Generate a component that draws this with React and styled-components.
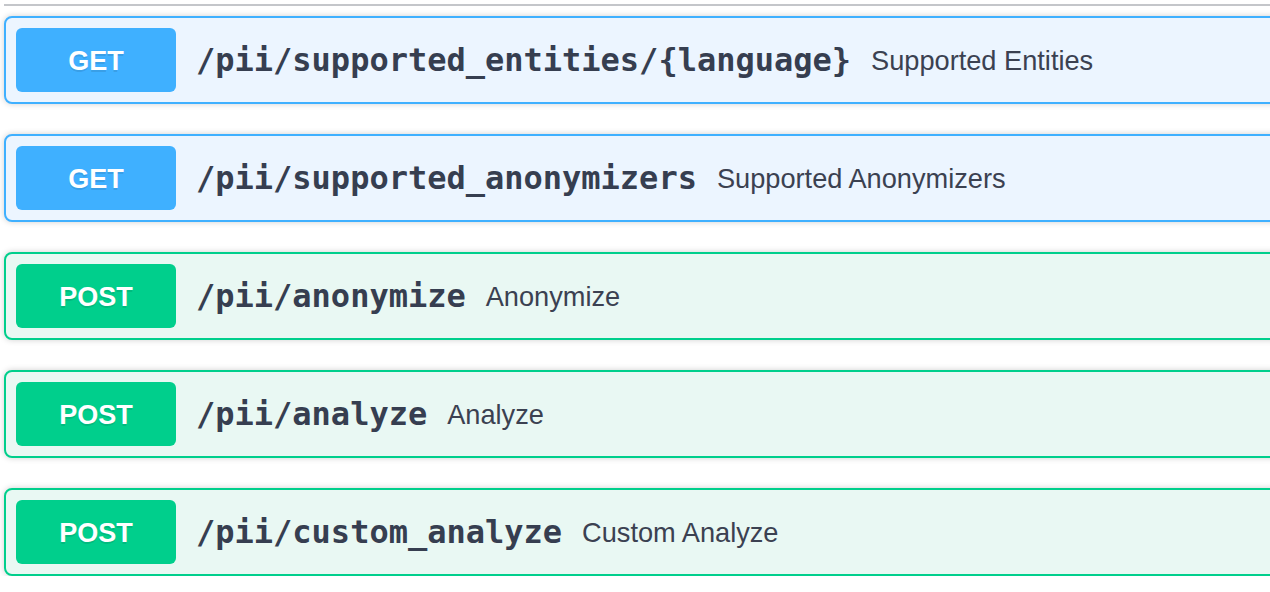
import React from 'react'
import styled, { createGlobalStyle } from 'styled-components'

const GlobalStyle = createGlobalStyle`
  html, body {
    margin: 0;
    padding: 0;
    background: #ffffff;
    overflow: hidden;
  }
`

const methodColors = {
  get: { main: '#3fb0ff', light: '#ecf5ff' },
  post: { main: '#00cf8c', light: '#e9f8f3' },
}

const endpoints = [
  { method: 'get', path: '/pii/supported_entities/{language}', summary: 'Supported Entities' },
  { method: 'get', path: '/pii/supported_anonymizers', summary: 'Supported Anonymizers' },
  { method: 'post', path: '/pii/anonymize', summary: 'Anonymize' },
  { method: 'post', path: '/pii/analyze', summary: 'Analyze' },
  { method: 'post', path: '/pii/custom_analyze', summary: 'Custom Analyze' },
]

const App = () => {
  return (
    <>
      <GlobalStyle />
      <Section>
        <TagLine />
        <List>
          {endpoints.map((ep) => (
            <Opblock key={ep.path} $method={ep.method}>
              <Summary>
                <Method $method={ep.method}>{ep.method.toUpperCase()}</Method>
                <Path>{ep.path}</Path>
                <Description>{ep.summary}</Description>
              </Summary>
            </Opblock>
          ))}
        </List>
      </Section>
    </>
  )
}

const Section = styled.div`
  width: 1320px;
  padding: 4px 0 0 4px;
`

const TagLine = styled.div`
  height: 2px;
  background: rgba(59, 65, 81, 0.3);
`

const List = styled.div`
  display: flex;
  flex-direction: column;
  gap: 30px;
  margin-top: 10px;
`

const Opblock = styled.div`
  border: 2px solid ${(p) => methodColors[p.$method].main};
  background: ${(p) => methodColors[p.$method].light};
  border-radius: 8px;
  box-shadow: 0 0 6px rgba(0, 0, 0, 0.19);
`

const Summary = styled.div`
  display: flex;
  align-items: center;
  padding: 10px;
`

const Method = styled.div`
  min-width: 160px;
  height: 64px;
  display: flex;
  align-items: center;
  justify-content: center;
  border-radius: 6px;
  background: ${(p) => methodColors[p.$method].main};
  color: #ffffff;
  font-family: 'Liberation Sans', Arial, sans-serif;
  font-weight: 700;
  font-size: 27px;
  padding-top: 2px;
  box-sizing: border-box;
  text-shadow: 0 2px 0 rgba(0, 0, 0, 0.1);
`

const Path = styled.span`
  padding: 0 20px;
  font-family: 'DejaVu Sans Mono', monospace;
  font-weight: 700;
  font-size: 32px;
  color: #363e50;
`

const Description = styled.span`
  font-family: 'Liberation Sans', Arial, sans-serif;
  font-size: 27.2px;
  padding-top: 2px;
  color: #3b4151;
`

export default App
